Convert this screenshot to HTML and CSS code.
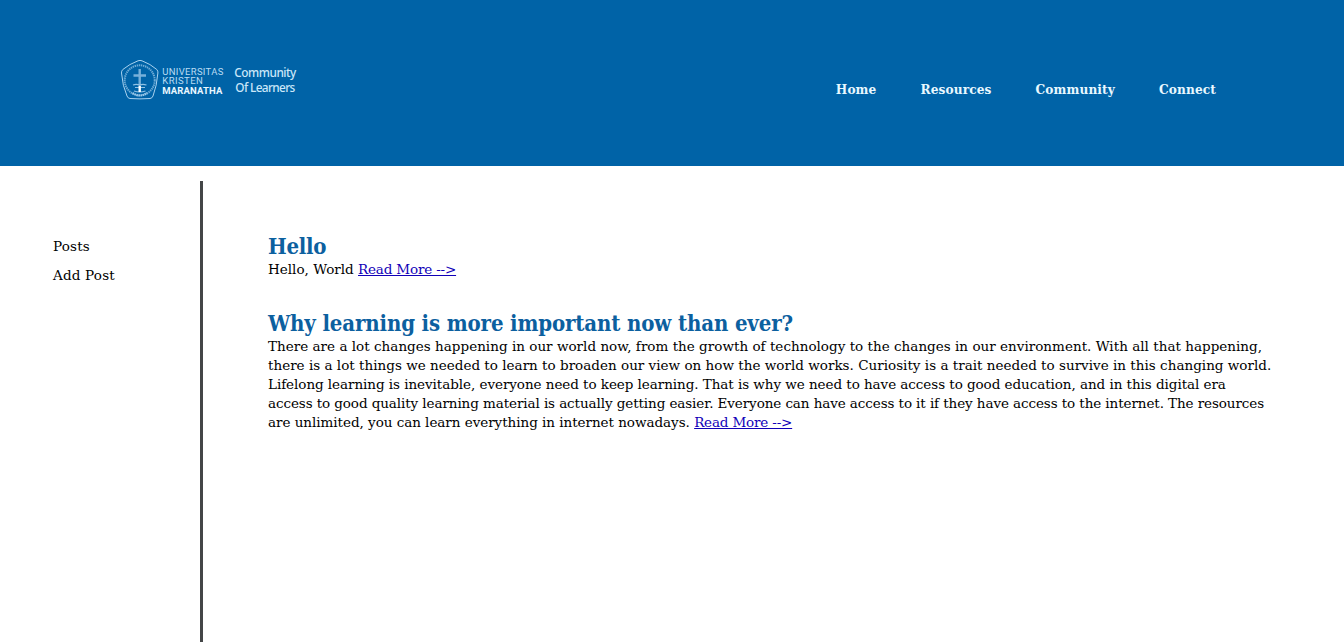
FILE: index.html
```html
<!DOCTYPE html>
<html lang="en">
<head>
<meta charset="utf-8">
<title>Community of Learners</title>
<link rel="stylesheet" href="styles.css">
</head>
<body>
<header class="header">
  <a class="brand" href="#" aria-label="Home page">
    <svg class="logo" width="180" height="44" viewBox="0 0 180 44">
      <g fill="none" stroke="#a9d2ef" stroke-linejoin="round">
        <path d="M19 2.800Q21 2 23 2.800Q31.500 6 37.800 11.500Q39.200 13 38.900 15Q37.800 28 34 38Q33.200 40.300 31 40.500Q21 41.300 11 40.500Q8.800 40.300 8 38Q3.500 28 2.500 15Q2.300 13 3.800 11.500Q10.500 6 19 2.800Z" stroke-width="1"/>
        <circle cx="20.700" cy="22.300" r="15" stroke-width="2" stroke-dasharray="1.400 .7" opacity=".65"/>
        <path d="M13.500 35Q20.700 40 28 35" stroke-width="2.200" stroke-dasharray="1.600 .5" opacity=".8"/>
        <path d="M20.700 11V27M14.500 17.500H27" stroke-width="2.400" opacity=".7"/>
        <path d="M14 27Q18 25.500 20.700 27.500Q23 25.500 27.500 27M16 29.500H26M15 33Q20.700 35 26.500 33" stroke-width="1.200" opacity=".85"/>
        <path d="M20.700 28V34" stroke="#fff" stroke-width="2.400"/>
      </g>
      <g class="logo-name">
        <text x="43.300" y="16.500" textLength="61">UNIVERSITAS</text>
        <text x="43.300" y="26.300" textLength="40.500">KRISTEN</text>
        <text class="logo-strong" x="43.300" y="36.300" textLength="60">MARANATHA</text>
      </g>
      <g class="logo-tag">
        <text x="115.300" y="19" textLength="62">Community</text>
        <text x="116.300" y="34" textLength="60">Of Learners</text>
      </g>
    </svg>
  </a>
  <nav class="nav">
    <a href="#">Home</a>
    <a href="#">Resources</a>
    <a href="#">Community</a>
    <a href="#">Connect</a>
  </nav>
</header>
<div class="page">
  <aside class="sidebar">
    <a href="#">Posts</a>
    <a href="#">Add Post</a>
  </aside>
  <main class="content">
    <article class="post">
      <h2 class="title title-short">Hello</h2>
      <p class="text"><span class="greeting">Hello, World </span><a class="more" href="#">Read More --&gt;</a></p>
    </article>
    <article class="post">
      <h2 class="title">Why learning is more important now than ever?</h2>
      <p class="text">
        <span class="line-1">There are a lot changes happening in our world now, from the growth of technology to the changes in our environment. With all that happening,</span><br>
        <span class="line-2">there is a lot things we needed to learn to broaden our view on how the world works. Curiosity is a trait needed to survive in this changing world.</span><br>
        <span class="line-3">Lifelong learning is inevitable, everyone need to keep learning. That is why we need to have access to good education, and in this digital era</span><br>
        <span class="line-4">access to good quality learning material is actually getting easier. Everyone can have access to it if they have access to the internet. The resources</span><br>
        <span class="line-5">are unlimited, you can learn everything in internet nowadays. </span><a class="more" href="#">Read More --&gt;</a>
      </p>
    </article>
  </main>
</div>
</body>
</html>
```
FILE: styles.css
```css
* { box-sizing: border-box; margin: 0; padding: 0; }
body {
  height: 642px;
  overflow: hidden;
  display: flex;
  flex-direction: column;
  background: #fff;
  color: #000;
  font: 13.5px/19px "DejaVu Serif", serif;
}
.header {
  height: 166px;
  flex: none;
  display: flex;
  justify-content: space-between;
  padding: 58px 128px 0 119px;
  background: #0063a7;
}
.logo { display: block; }
.logo-name { font: 9.5px Roboto, sans-serif; fill: #b9dcf3; }
.logo-strong { font-weight: 700; fill: #e9f7ff; }
.logo-tag { font: 500 11.8px "Noto Sans", sans-serif; fill: #cbe7f9; }
.nav { display: flex; gap: 44px; padding-top: 22px; }
.nav a {
  color: #e9f8ff;
  font: 700 13.5px/19px "DejaVu Serif Condensed", "DejaVu Serif", serif;
  letter-spacing: .12px;
  text-decoration: none;
}
.page { flex: 1; display: flex; padding-top: 15px; }
.sidebar {
  width: 203px;
  flex: none;
  display: flex;
  flex-direction: column;
  gap: 10px;
  padding: 56px 0 0 53px;
  border-right: 3px solid #444647;
}
.sidebar a { color: #000; letter-spacing: .2px; text-decoration: none; }
.content { padding: 51px 0 0 65px; }
.post { margin-bottom: 30px; }
.title {
  color: #0c609f;
  font: 700 22px/28px "DejaVu Serif Condensed", "DejaVu Serif", serif;
  letter-spacing: -.14px;
}
.title-short { letter-spacing: -.25px; }
.text { white-space: nowrap; }
.greeting { letter-spacing: .01px; }
.more { color: #1100b8; letter-spacing: -.17px; }
.line-1 { letter-spacing: .02px; }
.line-2 { letter-spacing: .013px; }
.line-3 { letter-spacing: -.055px; }
.line-4 { letter-spacing: -.088px; }
.line-5 { letter-spacing: -.035px; }
```
